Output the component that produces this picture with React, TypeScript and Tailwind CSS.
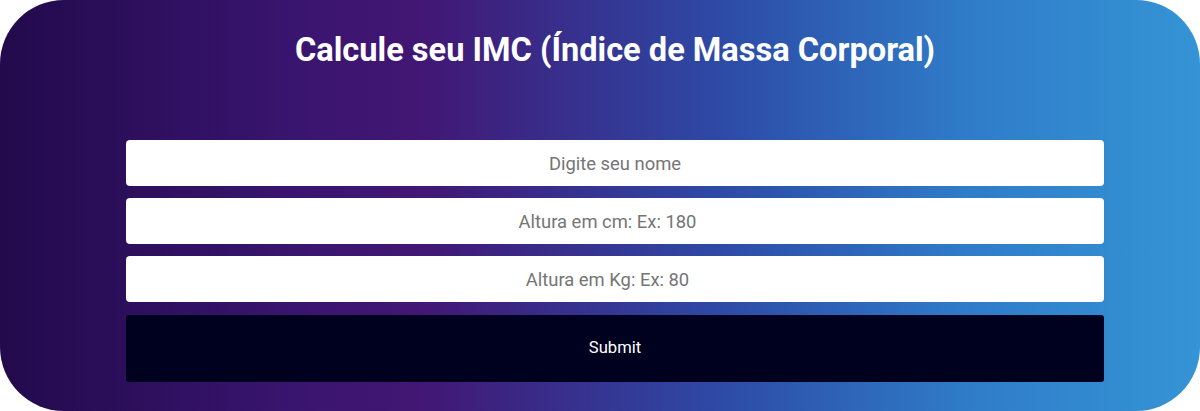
export default function App() {
  return (
    <div className="flex h-[411px] w-[1200px] flex-col items-center overflow-hidden rounded-[64px] bg-[linear-gradient(90deg,#220a4c_0%,#3a1570_25%,#421674_35%,#2d4aa6_60%,#2f7bc8_80%,#3594d5_100%)] pl-[30px] font-['Roboto',sans-serif]">
      <h1 className="pt-[28px] text-center text-[32.6px] leading-[44px] font-bold text-white">
        Calcule seu IMC (Índice de Massa Corporal)
      </h1>
      <form className="mt-[68px] flex w-[978px] flex-col gap-3">
        <input
          className="h-[46px] w-full rounded bg-white text-center text-[18.4px] text-[#333] placeholder:text-[#757575] outline-none"
          placeholder="Digite seu nome"
        />
        <input
          className="h-[46px] w-full rounded bg-white pr-[15px] text-center text-[18.4px] text-[#333] placeholder:text-[#757575] outline-none"
          placeholder="Altura em cm: Ex: 180"
        />
        <input
          className="h-[46px] w-full rounded bg-white pr-[15px] text-center text-[18.4px] text-[#333] placeholder:text-[#757575] outline-none"
          placeholder="Altura em Kg: Ex: 80"
        />
        <button
          type="button"
          className="mt-[1px] h-[67px] w-full rounded-[3px] bg-[#00001f] text-[16.6px] text-white"
        >
          Submit
        </button>
      </form>
    </div>
  );
}
